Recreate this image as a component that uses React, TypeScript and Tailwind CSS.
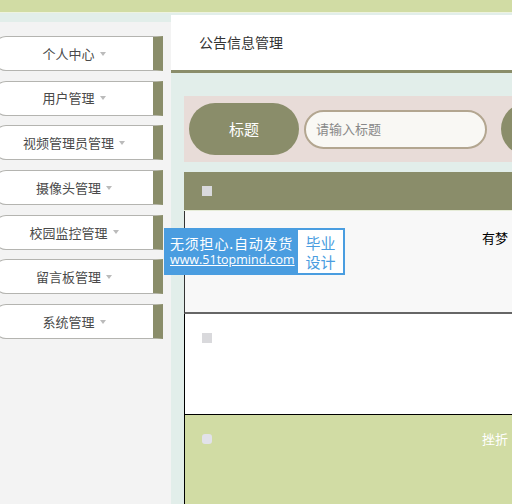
const menus = ["个人中心", "用户管理", "视频管理员管理", "摄像头管理", "校园监控管理", "留言板管理", "系统管理"];

function Caret() {
  return <span className="ml-[5px] inline-block h-0 w-0 border-x-[3px] border-t-[4px] border-x-transparent border-t-[#bbbbbb] align-middle" />;
}

function Check({ soft }: { soft?: boolean }) {
  return <span className={`block h-[10px] w-[10px] ${soft ? "rounded-[3px] bg-[#e2e2ea]" : "bg-[#d9d9dc]"}`} />;
}

export default function App() {
  return (
    <div
      className="relative flex h-[504px] w-full flex-col overflow-hidden bg-[#e2eeea] text-[#333]"
      style={{ fontFamily: "'Noto Sans CJK SC', 'Noto Sans', sans-serif" }}
    >
      {/* top strip */}
      <div className="h-[13px] shrink-0 border-b border-[#eef3e0] bg-[#d1dca4]" />

      <div className="flex flex-1">
        {/* sidebar */}
        <aside className="mt-[9px] flex w-[171px] shrink-0 flex-col gap-[9.7px] bg-[#f3f3f3] pt-[14px]">
          {menus.map((m) => (
            <div
              key={m}
              className="-ml-[6px] flex h-[35px] w-[169px] items-center justify-center rounded-l-[12px] border border-r-[10px] border-[#b4b4b0] border-r-[#8a8d6a] bg-white text-[13px] text-[#4a4a4a]"
            >
              {m}
              <Caret />
            </div>
          ))}
        </aside>

        {/* main */}
        <main className="mt-[2px] flex min-w-0 flex-1 flex-col">
          <div className="flex h-[58px] shrink-0 items-center border-b-[3px] border-[#8a8d6a] bg-white pl-[28px] text-[14px] text-[#333]">
            公告信息管理
          </div>

          <div className="pl-[13px]">
            {/* search */}
            <div className="mt-[23px] flex h-[66px] items-center whitespace-nowrap bg-[#e8dcd8] pl-[5px]">
              <div className="flex h-[52px] w-[110px] shrink-0 items-center justify-center rounded-full bg-[#8a8d6a] text-[15px] text-white">
                标题
              </div>
              <div className="ml-[5px] flex h-[39px] w-[183px] shrink-0 items-center rounded-full border-2 border-[#b3a690] bg-[#f9f8f4] pl-[10px] text-[13px] text-[#888]">
                请输入标题
              </div>
              <div className="ml-[14px] h-[52px] w-[110px] shrink-0 rounded-full bg-[#8a8d6a]" />
            </div>

            {/* table */}
            <div className="mt-[10px] whitespace-nowrap">
              <div className="flex h-[39px] items-center border-b border-[#e6ecd8] bg-[#8a8d6a] pl-[18px]">
                <Check />
              </div>
              <div className="relative h-[103px] border-b-2 border-l border-[#666] border-l-[#333] bg-[#f8f8f8]">
                <span className="absolute left-[297px] top-[17px] text-[13px] text-black">有梦</span>
              </div>
              <div className="h-[101px] border-b border-l border-black bg-white pl-[17px] pt-[19px]">
                <Check />
              </div>
              <div className="relative h-[100px] border-l border-black bg-[#d1dca4] pl-[17px] pt-[19px]">
                <Check soft />
                <span className="absolute left-[297px] top-[14px] text-[13px] text-white">挫折</span>
              </div>
            </div>
          </div>
        </main>
      </div>

      {/* watermark badge */}
      <div className="absolute left-[164px] top-[228px] flex h-[47px] items-stretch bg-[#4a9de0] p-[2px]">
        <div className="flex w-[132px] flex-col justify-center pl-[4px] leading-tight text-white">
          <span className="text-[14px] tracking-[0.8px]">无须担心.自动发货</span>
          <span className="text-[12.5px] underline" style={{ fontFamily: "'Open Sans', sans-serif" }}>www.51topmind.com</span>
        </div>
        <div className="flex w-[45px] flex-col items-center justify-center bg-white text-[15px] leading-[19px] text-[#4a9de0]">
          <span>毕业</span>
          <span>设计</span>
        </div>
      </div>
    </div>
  );
}
